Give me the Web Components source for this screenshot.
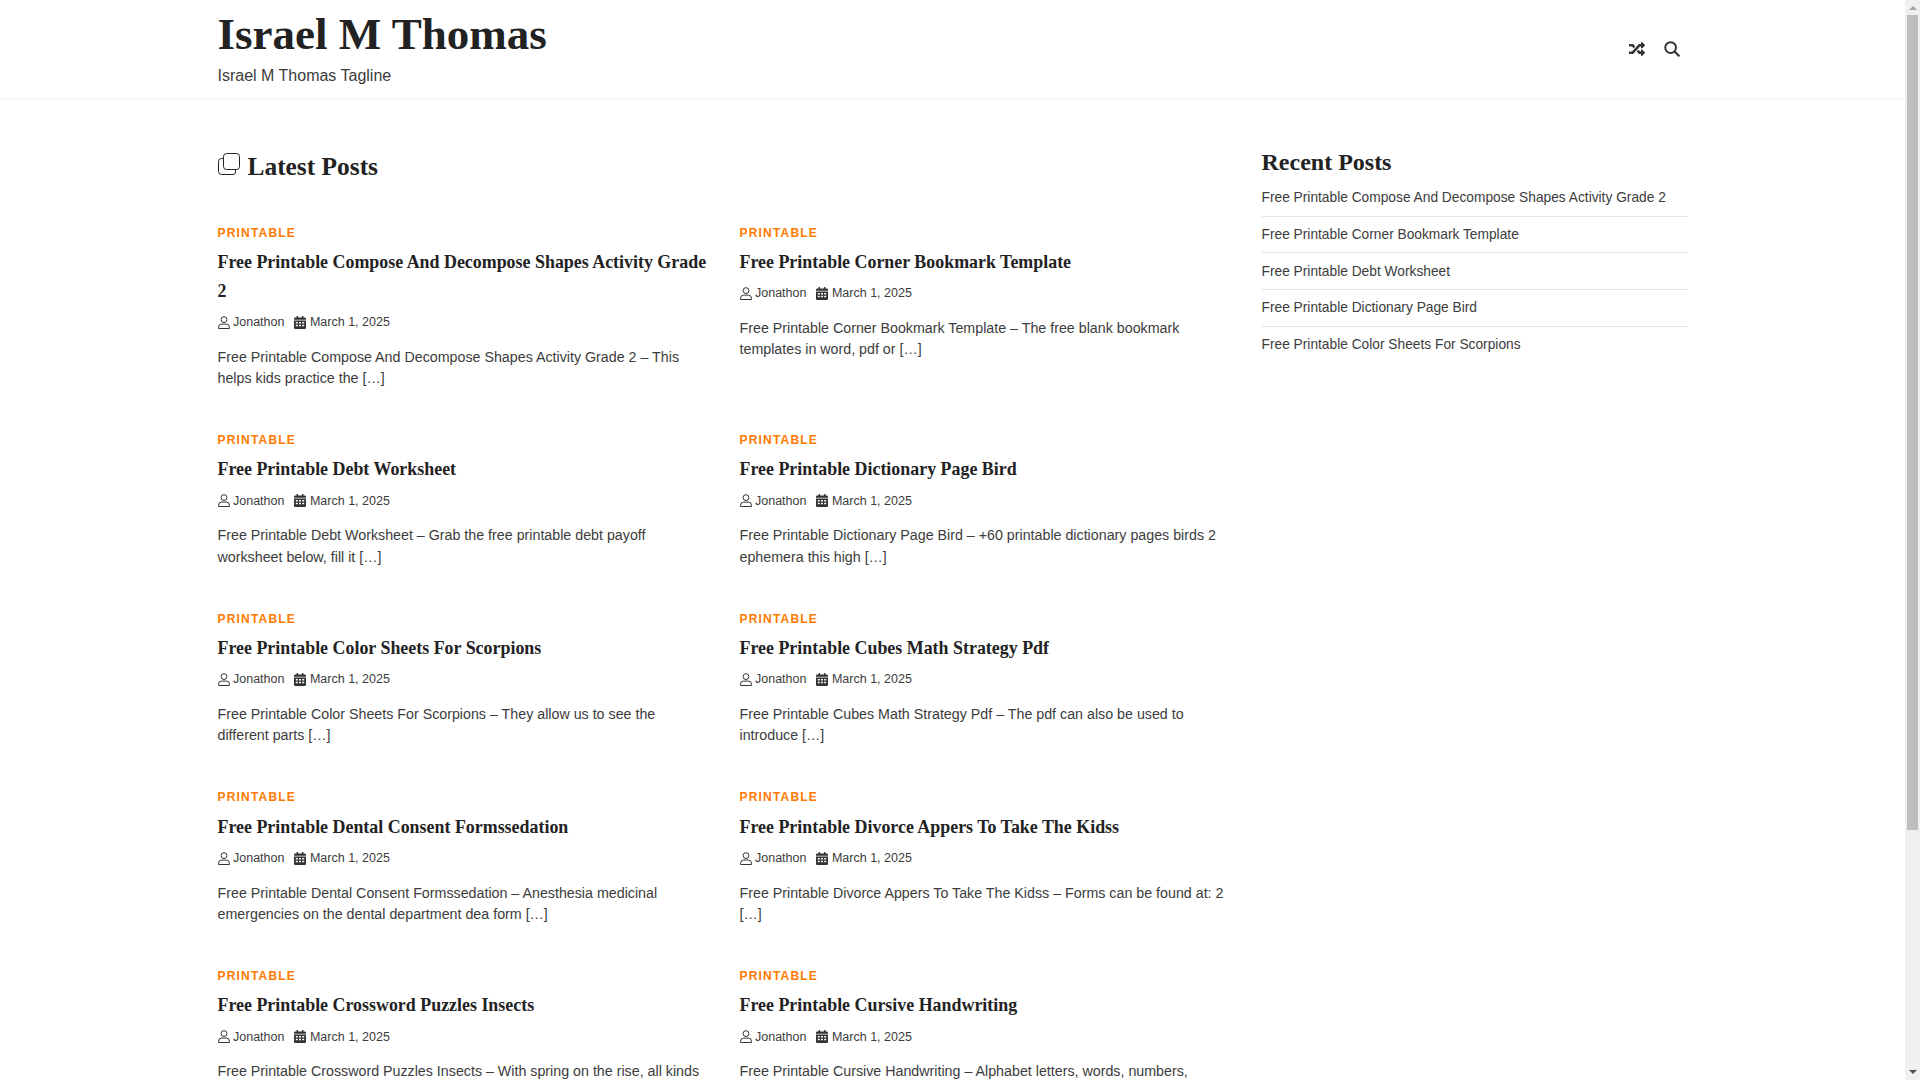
<!DOCTYPE html>
<html lang="en">
<head>
<meta charset="utf-8">
<title>Israel M Thomas</title>
<style>
  html, body { margin: 0; padding: 0; height: 100%; overflow: hidden; background: #fff; }
  body { font-family: "Liberation Sans", Arial, sans-serif; color: #222; }
</style>
</head>
<body>
<page-shell>
<site-header title="Israel M Thomas" tagline="Israel M Thomas Tagline"></site-header>
<site-layout>
  <section-title>Latest Posts</section-title>
  <post-card title="Free Printable Compose And Decompose Shapes Activity Grade 2">Free Printable Compose And Decompose Shapes Activity Grade 2 – This helps kids practice the […]</post-card>
  <post-card title="Free Printable Corner Bookmark Template">Free Printable Corner Bookmark Template – The free blank bookmark templates in word, pdf or […]</post-card>
  <post-card title="Free Printable Debt Worksheet">Free Printable Debt Worksheet – Grab the free printable debt payoff worksheet below, fill it […]</post-card>
  <post-card title="Free Printable Dictionary Page Bird">Free Printable Dictionary Page Bird – +60 printable dictionary pages birds 2 ephemera this high […]</post-card>
  <post-card title="Free Printable Color Sheets For Scorpions">Free Printable Color Sheets For Scorpions – They allow us to see the different parts […]</post-card>
  <post-card title="Free Printable Cubes Math Strategy Pdf">Free Printable Cubes Math Strategy Pdf – The pdf can also be used to introduce […]</post-card>
  <post-card title="Free Printable Dental Consent Formssedation">Free Printable Dental Consent Formssedation – Anesthesia medicinal emergencies on the dental department dea form […]</post-card>
  <post-card title="Free Printable Divorce Appers To Take The Kidss">Free Printable Divorce Appers To Take The Kidss – Forms can be found at: 2 […]</post-card>
  <post-card title="Free Printable Crossword Puzzles Insects">Free Printable Crossword Puzzles Insects – With spring on the rise, all kinds of bugs […]</post-card>
  <post-card title="Free Printable Cursive Handwriting">Free Printable Cursive Handwriting – Alphabet letters, words, numbers, punctuation […]</post-card>
  <recent-posts slot="side">
    <a>Free Printable Compose And Decompose Shapes Activity Grade 2</a>
    <a>Free Printable Corner Bookmark Template</a>
    <a>Free Printable Debt Worksheet</a>
    <a>Free Printable Dictionary Page Bird</a>
    <a>Free Printable Color Sheets For Scorpions</a>
  </recent-posts>
</site-layout>
</page-shell>
<script>
const RANDOM_PATH = 'M504.971 359.029c9.373 9.373 9.373 24.569 0 33.941l-80 79.984c-15.01 15.01-40.971 4.49-40.971-16.971V416h-58.785a12.004 12.004 0 0 1-8.773-3.812l-70.556-75.596 53.333-57.143L352 336h32v-39.981c0-21.438 25.943-31.998 40.971-16.971l80 79.981zM12 176h84l52.781 56.551 53.333-57.143-70.556-75.596A11.999 11.999 0 0 0 122.785 96H12c-6.627 0-12 5.373-12 12v56c0 6.627 5.373 12 12 12zm372 0v39.984c0 21.46 25.961 31.98 40.971 16.971l80-79.984c9.373-9.373 9.373-24.569 0-33.941l-80-79.981C409.943 24.021 384 34.582 384 56.019V96h-58.785a12.004 12.004 0 0 0-8.773 3.812L96 336H12c-6.627 0-12 5.373-12 12v56c0 6.627 5.373 12 12 12h110.785c3.326 0 6.503-1.381 8.773-3.812L352 176h32z';

// the photograph hides native scrollbars, so the bar is drawn beside the page
class PageShell extends HTMLElement {
  connectedCallback() {
    const root = this.attachShadow({ mode: 'open' });
    root.innerHTML = `
      <style>
        :host { display: flex; height: 100vh; }
        .page { flex: 1; min-width: 0; overflow: hidden; }
        .bar { width: 15px; flex: none; background: #f0f0f0; display: flex; flex-direction: column; align-items: center; }
        .arrow { flex: none; width: 0; height: 0; border-left: 4px solid transparent; border-right: 4px solid transparent; }
        .up { margin-top: 6px; border-bottom: 4px solid #a3a3a3; }
        .thumb { flex: none; width: 11px; height: 815px; margin-top: 5px; background: #bebebe; }
        .down { margin-top: auto; margin-bottom: 6px; border-top: 4px solid #505050; }
      </style>
      <div class="page"><slot></slot></div>
      <div class="bar"><i class="arrow up"></i><div class="thumb"></div><i class="arrow down"></i></div>`;
  }
}

class SiteHeader extends HTMLElement {
  connectedCallback() {
    const root = this.attachShadow({ mode: 'open' });
    root.innerHTML = `
      <style>
        :host { display: block; background: #fff; box-shadow: 0 1px 3px rgba(0,0,0,.07); position: relative; }
        .inner { width: 1470px; height: 98px; margin: 0 auto; display: flex; align-items: center; justify-content: space-between; }
        h1 { margin: 0; font: bold 45px/1.2 "Liberation Serif", "Times New Roman", serif; color: #222; }
        p { margin: 3.5px 0 0; font-size: 16px; line-height: 24px; color: #3c3c3c; }
        .brand { margin-top: -3.5px; }
        .tools { display: flex; gap: 19px; margin-right: 8px; align-items: center; }
        .tools svg { display: block; width: 16px; height: 16px; }
      </style>
      <div class="inner">
        <div class="brand">
          <h1>${this.getAttribute('title')}</h1>
          <p>${this.getAttribute('tagline')}</p>
        </div>
        <div class="tools">
          <svg viewBox="0 0 512 512" fill="#333"><path d="${RANDOM_PATH}"/></svg>
          <svg viewBox="0 0 16 16" fill="none" stroke="#333" stroke-width="1.9"><circle cx="6.6" cy="6.6" r="5.4"/><path d="M10.6 10.6l4.8 4.8" stroke-width="2.1"/></svg>
        </div>
      </div>`;
  }
}

class SiteLayout extends HTMLElement {
  connectedCallback() {
    const root = this.attachShadow({ mode: 'open' });
    root.innerHTML = `
      <style>
        :host { display: block; }
        .wrap { width: 1470px; margin: 0 auto; padding-top: 49.5px; display: grid; grid-template-columns: 1012px 426px; gap: 32px; align-items: start; box-sizing: border-box; }
        .posts { display: grid; grid-template-columns: 490px 490px; column-gap: 32px; row-gap: 41.5px; }
        ::slotted(section-title) { grid-column: 1 / -1; }
        .side { margin-top: -1px; }
      </style>
      <div class="wrap">
        <div class="posts"><slot></slot></div>
        <div class="side"><slot name="side"></slot></div>
      </div>`;
  }
}

class SectionTitle extends HTMLElement {
  connectedCallback() {
    const root = this.attachShadow({ mode: 'open' });
    root.innerHTML = `
      <style>
        :host { display: flex; align-items: center; gap: 8px; margin-bottom: -1.5px; }
        h2 { margin: 0; font: bold 25.4px/36px "Liberation Serif", "Times New Roman", serif; color: #222; }
        svg { width: 22px; height: 22px; display: block; margin-top: -3px; fill: none; stroke: #222; stroke-width: 1; }
      </style>
      <svg viewBox="0 0 22 22">
        <rect x="5.5" y="0.5" width="16" height="16" rx="3"/>
        <path d="M5.5 5.5H3.5a3 3 0 0 0-3 3v10a3 3 0 0 0 3 3H15a2.5 2.5 0 0 0 2.5-2.5v-2"/>
      </svg>
      <h2><slot></slot></h2>`;
  }
}

class PostCard extends HTMLElement {
  connectedCallback() {
    const root = this.attachShadow({ mode: 'open' });
    root.innerHTML = `
      <style>
        :host { display: block; }
        .cat { display: block; font-size: 12px; line-height: 18px; font-weight: 700; letter-spacing: 1.2px; color: #ff7a00; text-transform: uppercase; }
        h3 { margin: 6.5px 0 0; font: bold 17.92px/28.67px "Liberation Serif", "Times New Roman", serif; color: #222; }
        .meta { display: flex; gap: 10px; margin-top: 6.7px; font-size: 12.5px; line-height: 20px; color: #3c3c3c; }
        .meta span { display: inline-flex; align-items: center; gap: 3.5px; }
        .meta svg { width: 12px; height: 13px; display: block; }
        p { margin: 14.5px 0 0; font-size: 14.25px; line-height: 21.4px; color: #3c3c3c; }
      </style>
      <span class="cat">Printable</span>
      <h3>${this.getAttribute('title')}</h3>
      <div class="meta">
        <span><svg viewBox="0 0 12 13" fill="none" stroke="#333" stroke-width="1"><circle cx="6" cy="3.6" r="2.9"/><path d="M.6 12.5v-1.4a3 3 0 0 1 3-3h4.8a3 3 0 0 1 3 3v1.4z"/></svg>Jonathon</span>
        <span><svg viewBox="0 0 12 13" fill="#333"><path d="M0 4.6h12v7.2a1.2 1.2 0 0 1-1.2 1.2H1.2A1.2 1.2 0 0 1 0 11.8zM1.2 1.6h1.3V.4a.4.4 0 0 1 .4-.4h.8a.4.4 0 0 1 .4.4v1.2h3.8V.4a.4.4 0 0 1 .4-.4h.8a.4.4 0 0 1 .4.4v1.2h1.3A1.2 1.2 0 0 1 12 2.8v1H0v-1a1.2 1.2 0 0 1 1.2-1.2z"/><path fill="#fff" d="M1.8 6h2v1.4h-2zM5 6h2v1.4H5zM8.2 6h2v1.4h-2zM1.8 8.8h2v1.4h-2zM5 8.8h2v1.4H5zM8.2 8.8h2v1.4h-2z"/></svg>March 1, 2025</span>
      </div>
      <p><slot></slot></p>`;
  }
}

class RecentPosts extends HTMLElement {
  connectedCallback() {
    const root = this.attachShadow({ mode: 'open' });
    const links = [...this.querySelectorAll('a')].map(a => `<li>${a.textContent}</li>`).join('');
    root.innerHTML = `
      <style>
        :host { display: block; }
        h2 { margin: 0 0 6px; font: bold 24px/30px "Liberation Serif", "Times New Roman", serif; color: #222; }
        ul { list-style: none; margin: 0; padding: 0; }
        li { font-size: 13.75px; line-height: 21px; color: #3c3c3c; padding: 7.33px 0; border-bottom: 1px solid #e5e5e5; }
        li:first-child { padding-top: 4.3px; padding-bottom: 8px; }
        li:last-child { border-bottom: 0; }
      </style>
      <h2>Recent Posts</h2>
      <ul>${links}</ul>`;
  }
}

customElements.define('page-shell', PageShell);
customElements.define('site-header', SiteHeader);
customElements.define('site-layout', SiteLayout);
customElements.define('section-title', SectionTitle);
customElements.define('post-card', PostCard);
customElements.define('recent-posts', RecentPosts);
</script>
</body>
</html>
